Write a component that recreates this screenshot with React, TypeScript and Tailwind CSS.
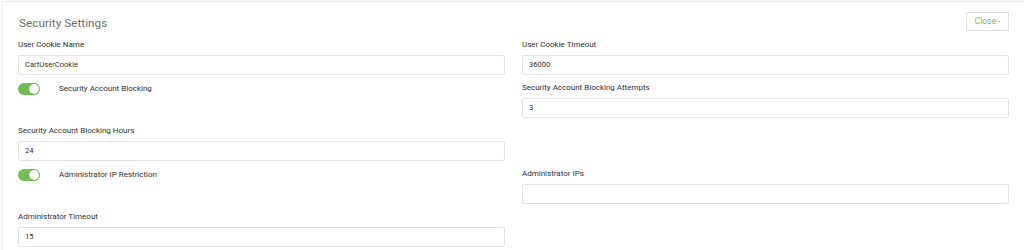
import React from "react";

function Label({ children }: { children: React.ReactNode }) {
  return (
    <div className="h-[10px] text-[8px] leading-[10px] font-normal text-[#2f2f2f] mb-[5px] whitespace-nowrap">
      {children}
    </div>
  );
}

function Field({ label, value }: { label: string; value: string }) {
  return (
    <div className="mb-[8px]">
      <Label>{label}</Label>
      <div className="h-[20px] border border-[#e2e2e2] rounded-[2px] bg-white flex items-center pl-[6px] text-[7.6px] text-[#333]">
        {value}
      </div>
    </div>
  );
}

function Toggle({ label }: { label: string }) {
  return (
    <div className="flex items-center h-[12px]">
      <div className="relative w-[22px] h-[12px] rounded-full bg-[#6cc152]">
        <div className="absolute right-[1px] top-[1px] w-[10px] h-[10px] rounded-full bg-white shadow-[0_0_1px_rgba(0,0,0,0.4)]" />
      </div>
      <div className="ml-[19px] text-[8px] leading-[10px] font-normal text-[#2f2f2f] whitespace-nowrap">
        {label}
      </div>
    </div>
  );
}

export default function App() {
  return (
    <div className="w-full h-[250px] bg-white overflow-hidden" style={{ fontFamily: "Roboto, 'Liberation Sans', sans-serif" }}>
      <div className="ml-[2px] mt-[1px] border-l border-t border-[#ececec] pl-[15px] pr-[15px] h-[249px]">
        <div className="flex justify-between items-start h-[38px]">
          <div className="pt-[13px] text-[11.8px] leading-[16px] text-[#6f6f6f] ml-[1px]">Security Settings</div>
          <div className="mt-[10px] h-[19px] w-[43px] border border-[#e0e0e0] flex items-center justify-center text-[8.5px] text-[#72c060]">
            Close -
          </div>
        </div>
        <div className="grid grid-cols-2 gap-x-[17px]">
          <Field label="User Cookie Name" value="CartUserCookie" />
          <Field label="User Cookie Timeout" value="36000" />
          <Toggle label="Security Account Blocking" />
          <Field label="Security Account Blocking Attempts" value="3" />
          <Field label="Security Account Blocking Hours" value="24" />
          <div />
          <Toggle label="Administrator IP Restriction" />
          <Field label="Administrator IPs" value="" />
          <Field label="Administrator Timeout" value="15" />
          <div />
        </div>
      </div>
    </div>
  );
}
